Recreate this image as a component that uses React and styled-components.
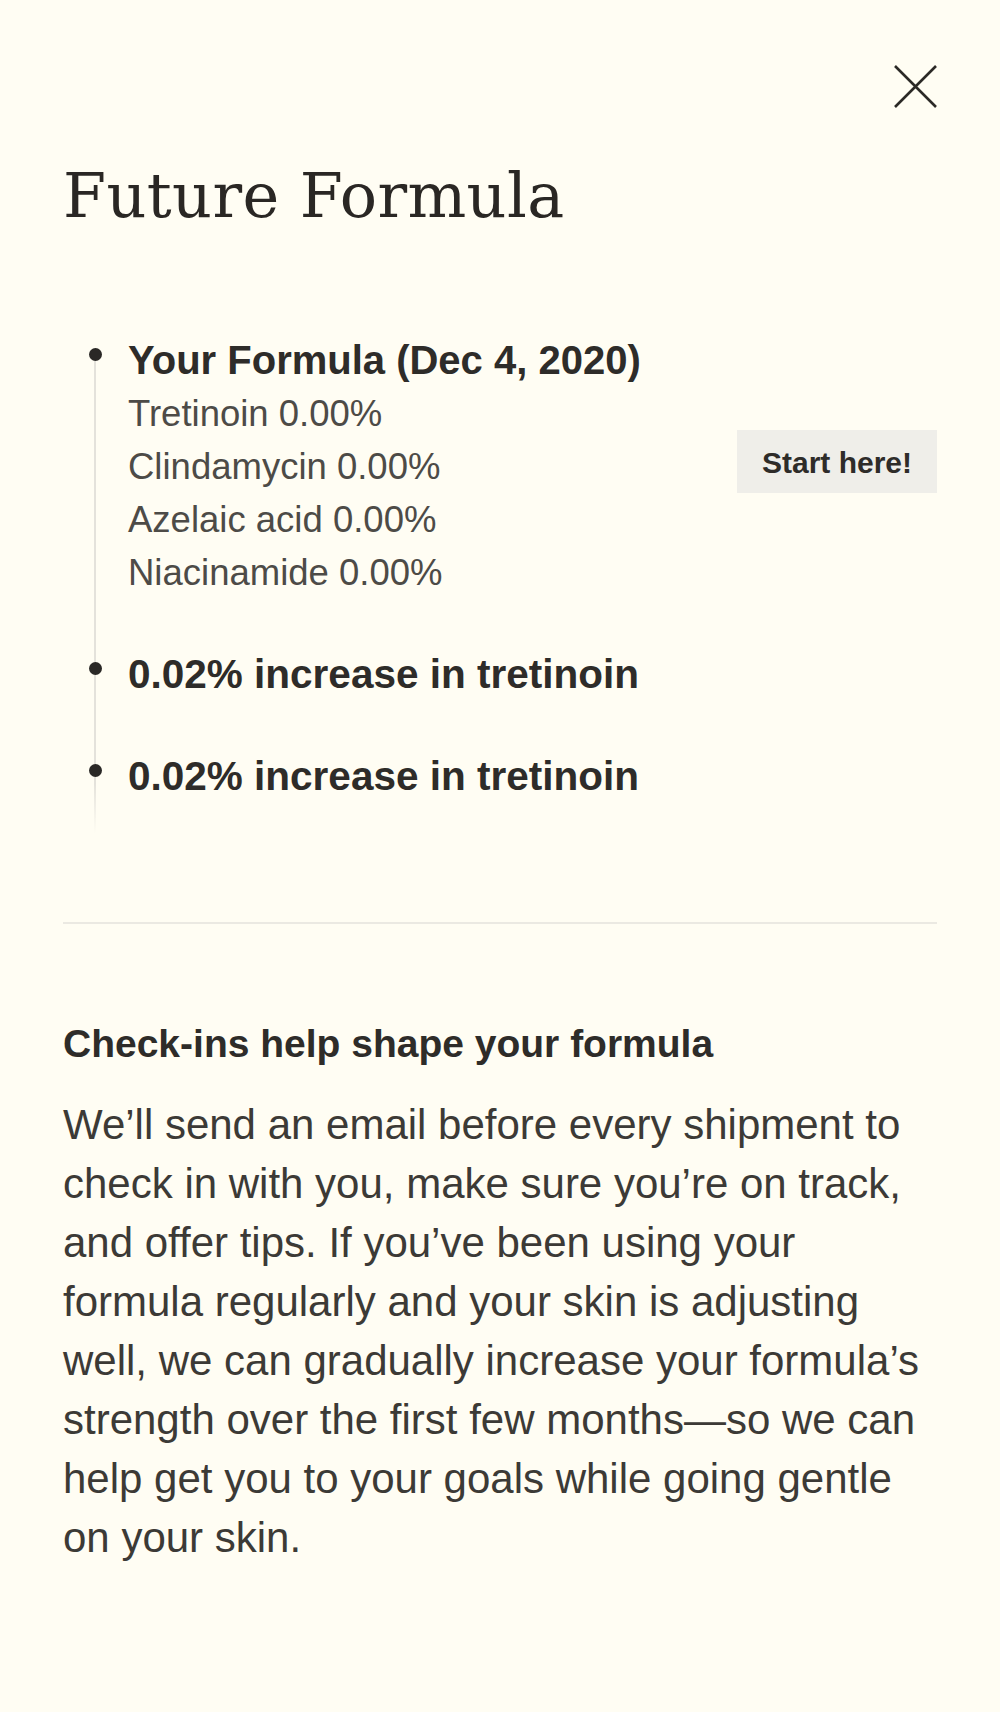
import React from "react";
import styled, { createGlobalStyle } from "styled-components";

const GlobalStyle = createGlobalStyle`
  html, body {
    margin: 0;
    padding: 0;
    background: #fffdf3;
  }
  body {
    font-family: "Liberation Sans", Arial, sans-serif;
    color: #2e2c29;
  }
  * { box-sizing: border-box; }
`;

const Page = styled.main`
  min-height: 1712px;
  padding: 65px 63px 0;
  background: #fffdf3;
`;

const TopBar = styled.header`
  display: flex;
  justify-content: flex-end;
  height: 43px;
`;

const CloseButton = styled.button`
  display: flex;
  width: 43px;
  height: 43px;
  padding: 0;
  border: 0;
  background: none;
  color: #2b2926;
  cursor: pointer;
  svg { display: block; }
`;

const Title = styled.h1`
  margin: 57px 0 0;
  font-family: "DejaVu Serif", serif;
  font-weight: 400;
  font-size: 62px;
  line-height: 62px;
  letter-spacing: 0.4px;
  color: #2a2724;
`;

const Timeline = styled.ol`
  position: relative;
  list-style: none;
  margin: 106px 0 0;
  padding: 0 0 30px 65px;
  &::before {
    content: "";
    position: absolute;
    left: 31px;
    top: 22px;
    bottom: 0;
    width: 2px;
    background: linear-gradient(
      to bottom,
      #e4e2db 0,
      #e4e2db calc(100% - 50px),
      rgba(228, 226, 219, 0) 100%
    );
  }
`;

const Item = styled.li`
  position: relative;
  display: flex;
  align-items: center;
  justify-content: space-between;
  & + & { margin-top: 48px; }
  &::before {
    content: "";
    position: absolute;
    left: -39.5px;
    top: 14.5px;
    width: 13px;
    height: 13px;
    border-radius: 50%;
    background: #2a2826;
  }
`;

const ItemBody = styled.div`
  display: flex;
  flex-direction: column;
`;

const ItemTitle = styled.div`
  font-weight: 700;
  font-size: ${(p) => p.$size || 40}px;
  line-height: 54px;
  color: #2e2c29;
`;

const Ingredients = styled.ul`
  list-style: none;
  margin: 0;
  padding: 0;
`;

const Ingredient = styled.li`
  font-size: 36.5px;
  line-height: 53px;
  color: #4d4b47;
`;

const StartButton = styled.button`
  flex: none;
  width: 200px;
  height: 63px;
  margin-bottom: 10px;
  padding: 4px 0 0;
  border: 0;
  background: #efeee9;
  font-family: inherit;
  font-weight: 700;
  font-size: 30px;
  color: #2e2c29;
  cursor: pointer;
`;

const Divider = styled.hr`
  margin: 89px 0 0;
  border: 0;
  height: 2px;
  background: #ebe9e2;
`;

const InfoHeading = styled.h2`
  margin: 93px 0 0;
  font-weight: 700;
  font-size: 39px;
  line-height: 54px;
  color: #2e2c29;
`;

const InfoText = styled.p`
  margin: 24px 0 0;
  font-size: 42px;
  line-height: 59px;
  color: #3c3a36;
`;

const ingredients = [
  "Tretinoin 0.00%",
  "Clindamycin 0.00%",
  "Azelaic acid 0.00%",
  "Niacinamide 0.00%",
];

export default function App() {
  return (
    <>
      <GlobalStyle />
      <Page>
        <TopBar>
          <CloseButton aria-label="Close">
            <svg width="43" height="43" viewBox="0 0 43 43" fill="none">
              <path
                d="M1 1 L42 42 M42 1 L1 42"
                stroke="currentColor"
                strokeWidth="2.6"
                strokeLinecap="butt"
              />
            </svg>
          </CloseButton>
        </TopBar>
        <Title>Future Formula</Title>
        <Timeline>
          <Item>
            <ItemBody>
              <ItemTitle>Your Formula (Dec 4, 2020)</ItemTitle>
              <Ingredients>
                {ingredients.map((i) => (
                  <Ingredient key={i}>{i}</Ingredient>
                ))}
              </Ingredients>
            </ItemBody>
            <StartButton>Start here!</StartButton>
          </Item>
          <Item>
            <ItemTitle $size={40.5}>0.02% increase in tretinoin</ItemTitle>
          </Item>
          <Item>
            <ItemTitle $size={40.5}>0.02% increase in tretinoin</ItemTitle>
          </Item>
        </Timeline>
        <Divider />
        <InfoHeading>Check-ins help shape your formula</InfoHeading>
        <InfoText>
          We’ll send an email before every shipment to check in with you, make
          sure you’re on track, and offer tips. If you’ve been using your
          formula regularly and your skin is adjusting well, we can gradually
          increase your formula’s strength over the first few months—so we can
          help get you to your goals while going gentle on your skin.
        </InfoText>
      </Page>
    </>
  );
}
